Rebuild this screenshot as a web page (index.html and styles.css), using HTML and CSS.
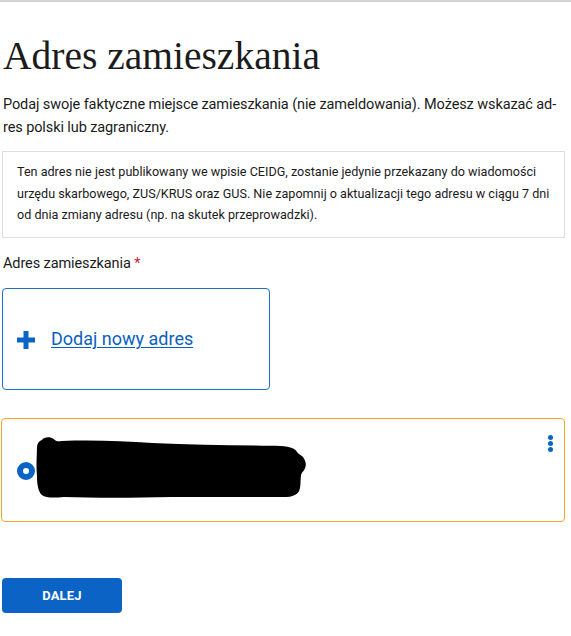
FILE: index.html
```html
<!DOCTYPE html>
<html lang="pl">
<head>
<meta charset="utf-8">
<title>Adres zamieszkania</title>
<link rel="stylesheet" href="styles.css">
</head>
<body>
<div class="topline"></div>
<main class="page">
  <h1 class="title">Adres zamieszkania</h1>
  <p class="lead">Podaj swoje faktyczne miejsce zamieszkania (nie zameldowania). Możesz wskazać ad&shy;res polski lub zagraniczny.</p>
  <div class="info">Ten adres nie jest publikowany we wpisie CEIDG, zostanie jedynie przekazany do wiadomości urzędu skarbowego, ZUS/KRUS oraz GUS. Nie zapomnij o aktualizacji tego adresu w ciągu 7 dni od dnia zmiany adresu (np. na skutek przeprowadzki).</div>
  <div class="label">Adres zamieszkania <span class="req">*</span></div>
  <div class="add-card">
    <svg class="plus" width="18" height="18" viewBox="0 0 18 18" aria-hidden="true"><path d="M6.5 0h5v6.5H18v5h-6.5V18h-5v-6.5H0v-5h6.5z" fill="#0b63c5"/></svg>
    <a class="add-link" href="#">Dodaj nowy adres</a>
  </div>
  <div class="addr-card">
    <span class="radio"></span>
    <svg class="blob" width="274" height="63" viewBox="0 0 278 64" preserveAspectRatio="none" aria-hidden="true">
      <path d="M8 4 C10 1 16 0 20 3 C22 5 24 6 28 5 C60 4 90 5 120 7 C160 9 200 9 240 10 C255 10 262 11 266 15 C268 19 272 19 274 23 C277 28 276 33 272 37 C270 40 271 46 270 52 C269 58 266 61 256 62 C220 62 180 62 140 62 C100 63 60 63 30 62 C20 63 12 63 8 60 C4 56 3 48 3 40 C2 30 3 20 3 12 C3 8 5 5 8 4 Z" fill="#000"/>
    </svg>
    <span class="kebab"><i></i><i></i><i></i></span>
  </div>
  <button class="next" type="button">DALEJ</button>
</main>
</body>
</html>
```
FILE: styles.css
```css
html, body {
  margin: 0;
  padding: 0;
  background: #fff;
}
body {
  font-family: Roboto, "Liberation Sans", sans-serif;
  color: #1b1b1b;
}
.topline {
  height: 2px;
  background: #d4d4d4;
}
.page {
  padding: 0 6px 0 2px;
}
.title {
  font-family: "Liberation Serif", serif;
  font-weight: 400;
  font-size: 39.5px;
  line-height: 48px;
  margin: 30px 0 0 1px;
  color: #1b1b1b;
}
.lead {
  font-size: 14.5px;
  letter-spacing: -0.1px;
  line-height: 23px;
  margin: 13px 0 0 1px;
  padding-right: 4px;
  hyphens: manual;
}
.info {
  margin-top: 12px;
  border: 1px solid #dedede;
  padding: 9px 10px 11px 14px;
  font-size: 12.6px;
  line-height: 21.5px;
}
.label {
  margin-top: 15px;
  font-size: 14.5px;
  letter-spacing: -0.1px;
  line-height: 22px;
  margin-left: 1px;
}
.req {
  color: #d4213d;
}
.add-card {
  box-sizing: border-box;
  margin-top: 13px;
  width: 268px;
  height: 102px;
  border: 1px solid #1d6fc7;
  border-radius: 4px;
  display: flex;
  align-items: center;
  gap: 16px;
  padding-left: 14px;
}
.plus {
  flex: none;
  margin-top: 2px;
}
.add-link {
  color: #0b5fc1;
  font-size: 18px;
  text-decoration: underline;
  text-underline-offset: 2px;
  text-decoration-thickness: 1px;
}
.addr-card {
  position: relative;
  margin: 28px 0 0 -1px;
  height: 102px;
  border: 1px solid #f4a62a;
  border-radius: 4px;
  display: flex;
  align-items: center;
  padding-left: 15px;
}
.radio {
  flex: none;
  width: 6px;
  height: 6px;
  border: 6px solid #0b63c5;
  border-radius: 50%;
  margin-top: 2px;
}
.blob {
  flex: none;
  margin-left: -1px;
  margin-top: -4px;
}
.kebab {
  position: absolute;
  right: 11px;
  top: 16px;
  display: flex;
  flex-direction: column;
  gap: 1px;
}
.kebab i {
  width: 5px;
  height: 5px;
  border-radius: 50%;
  background: #0b63c5;
}
.next {
  display: block;
  margin-top: 56px;
  width: 120px;
  height: 35px;
  border: 0;
  border-radius: 4px;
  background: #0b63c5;
  color: #fff;
  font-family: Roboto, "Liberation Sans", sans-serif;
  font-weight: 700;
  font-size: 13px;
  letter-spacing: 0.2px;
  cursor: pointer;
}
```
